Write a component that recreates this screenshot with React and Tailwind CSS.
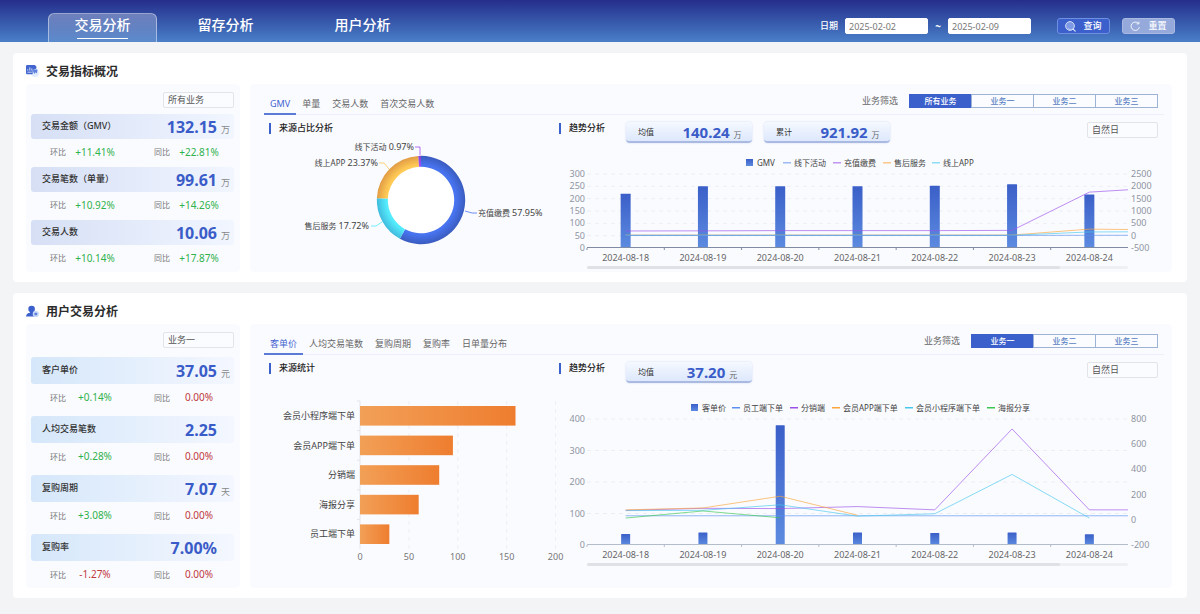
import { useState } from 'react';
import { ChevronDown } from 'lucide-react';
import clsx from 'clsx';

const NAV = ['交易分析', '留存分析', '用户分析'];

const OVERVIEW_STATS = [
  { label: '交易金额（GMV）', value: '132.15', unit: '万', mom: '+11.41%', yoy: '+22.81%' },
  { label: '交易笔数（单量）', value: '99.61', unit: '万', mom: '+10.92%', yoy: '+14.26%' },
  { label: '交易人数', value: '10.06', unit: '万', mom: '+10.14%', yoy: '+17.87%' },
];

const USER_STATS = [
  { label: '客户单价', value: '37.05', unit: '元', mom: '+0.14%', yoy: '0.00%' },
  { label: '人均交易笔数', value: '2.25', unit: '', mom: '+0.28%', yoy: '0.00%' },
  { label: '复购周期', value: '7.07', unit: '天', mom: '+3.08%', yoy: '0.00%' },
  { label: '复购率', value: '7.00%', unit: '', mom: '-1.27%', yoy: '0.00%' },
];

const DATES = [
  '2024-08-18',
  '2024-08-19',
  '2024-08-20',
  '2024-08-21',
  '2024-08-22',
  '2024-08-23',
  '2024-08-24',
];

// the eighth value of a line is where it leaves the zoomed window
const GMV_TREND = {
  id: 'gmv',
  height: 129,
  top: 31,
  bottom: 105,
  legendY: 20,
  legendOpacity: 0.6,
  axisColor: '#7f8ca3',
  left: [0, 50, 100, 150, 200, 250, 300],
  right: [-500, 0, 500, 1000, 1500, 2000, 2500],
  barWidth: 10,
  bars: [220, 250, 250, 250, 252, 258, 217],
  legend: [
    { name: 'GMV', x: 187 },
    { name: '线下活动', x: 224, color: '#5b8ff0' },
    { name: '充值缴费', x: 274, color: '#9b51e8' },
    { name: '售后服务', x: 324, color: '#fba63c' },
    { name: '线上APP', x: 373, color: '#46c8ee' },
  ],
  lines: [
    { color: '#9b51e8', values: [190, 195, 205, 205, 205, 215, 1765, 1860] },
    { color: '#fba63c', values: [25, 25, 25, 25, 25, 25, 265, 250] },
    { color: '#46c8ee', values: [15, 15, 15, 15, 15, 15, 150, 155] },
    { color: '#5b8ff0', values: [10, 10, 10, 10, 10, 10, 15, 15] },
  ],
};

const PRICE_TREND = {
  id: 'price',
  height: 205,
  top: 36,
  bottom: 162,
  legendY: 25,
  legendOpacity: 1,
  axisColor: '#b3bccb',
  left: [0, 100, 200, 300, 400],
  right: [-200, 0, 200, 400, 600, 800],
  barWidth: 9,
  bars: [35, 40, 380, 40, 38, 40, 34],
  legend: [
    { name: '客单价', x: 132 },
    { name: '员工端下单', x: 173, color: '#5b8ff0' },
    { name: '分销端', x: 231, color: '#9b51e8' },
    { name: '会员APP端下单', x: 273, color: '#fba63c' },
    { name: '会员小程序端下单', x: 346, color: '#46c8ee' },
    { name: '海报分享', x: 428, color: '#3cc850' },
  ],
  lines: [
    { color: '#5b8ff0', values: [32, 32, 32, 32, 32, 32, 32, 32] },
    { color: '#9b51e8', values: [75, 91, 89, 105, 79, 721, 79, 79] },
    { color: '#46c8ee', values: [73, 75, 119, 29, 48, 360, 14] },
    { color: '#fba63c', values: [79, 94, 187, 36] },
    { color: '#3cc850', values: [14, 70, 16] },
  ],
};

const SHARES = [
  {
    name: '充值缴费',
    pct: 57.95,
    inner: '#4874f0',
    outer: '#3a5bbd',
    leader: '201,77 208,79 213,79',
    x: 214,
    y: 79,
    anchor: 'start',
  },
  {
    name: '售后服务',
    pct: 17.72,
    inner: '#54ebfc',
    outer: '#3fb9dc',
    leader: '118,88 112,92 107,92',
    x: 105,
    y: 92,
    anchor: 'end',
  },
  {
    name: '线上APP',
    pct: 23.37,
    inner: '#ffca55',
    outer: '#e09a44',
    leader: '125,35 120,29 115,29',
    x: 114,
    y: 29,
    anchor: 'end',
  },
  {
    name: '线下活动',
    pct: 0.97,
    inner: '#a04df5',
    outer: '#8440d0',
    leader: '156,21 156,13 151,13',
    x: 150,
    y: 13,
    anchor: 'end',
  },
];

const SOURCES = [
  { name: '会员小程序端下单', value: 159 },
  { name: '会员APP端下单', value: 95 },
  { name: '分销端', value: 81 },
  { name: '海报分享', value: 60 },
  { name: '员工端下单', value: 30 },
];

function SelectBox({ label, options }) {
  return (
    <div className="relative h-4 w-[71px] shrink-0">
      <select
        aria-label={label}
        className="block h-full w-full appearance-none rounded-xs border border-[#e2e4ea] bg-[#fbfcff] pl-1 text-[9px] leading-[14px] text-[#555]"
      >
        {options.map((o) => (
          <option key={o}>{o}</option>
        ))}
      </select>
      <ChevronDown className="pointer-events-none absolute top-1 right-1.5 h-2 w-2 text-white" />
    </div>
  );
}

function Delta({ label, value }) {
  return (
    <div className="flex items-center gap-[9px]">
      <span className="text-[8px] text-[#777]">{label}</span>
      <span
        className={clsx(
          'w-10 text-center text-[10px]',
          value.startsWith('+') ? 'text-[#2fb24c]' : 'text-[#c0393f]'
        )}
      >
        {value}
      </span>
    </div>
  );
}

function Stat({ stat, roomy }) {
  return (
    <div>
      <div
        className={clsx(
          'flex items-center justify-between rounded-[3px] bg-linear-to-r pr-1 pl-[11px]',
          roomy ? 'h-[27px] from-[#d5e7fa] to-[#f4f7ff]' : 'h-[25px] from-[#d6dff5] to-[#f1f6ff]'
        )}
      >
        <span className="pb-0.5 text-[9px] font-medium text-[#333]">{stat.label}</span>
        <span className="flex items-baseline gap-1">
          <span className="text-[16px] leading-5 font-bold text-[#3a5cc8]">{stat.value}</span>
          <span className="w-[9px] text-[9px] text-[#888]">{stat.unit}</span>
        </span>
      </div>
      <div
        className={clsx(
          'flex items-center justify-between pr-[15px] pl-[19px]',
          roomy ? 'h-[27px]' : 'h-[26px]'
        )}
      >
        <Delta label="环比" value={stat.mom} />
        <Delta label="同比" value={stat.yoy} />
      </div>
    </div>
  );
}

function StatPanel({ stats, options, roomy }) {
  return (
    <div className="w-[214px] shrink-0 rounded-[4px] bg-[#fafbff] pt-2 pr-[6px] pl-[5px]">
      <div className={clsx('flex justify-end', roomy ? 'mb-[9px]' : 'mb-[6px]')}>
        <SelectBox label="业务" options={options} />
      </div>
      <div className={clsx('flex flex-col', roomy ? 'gap-[5px]' : 'gap-0.5')}>
        {stats.map((s) => (
          <Stat key={s.label} stat={s} roomy={roomy} />
        ))}
      </div>
    </div>
  );
}

function TabBar({ tabs, filters }) {
  const [tab, setTab] = useState(tabs[0]);
  const [filter, setFilter] = useState(filters[0]);
  return (
    <div className="flex h-[31px] items-end justify-between border-b border-[#edf0fa]">
      <div className="-mb-px flex">
        {tabs.map((t) => (
          <button
            key={t}
            onClick={() => setTab(t)}
            className={clsx(
              'h-5 border-b-2 px-1.5 text-[9px]',
              t === tab ? 'border-[#5c7bd6] text-[#3f62cf]' : 'border-transparent text-[#666]'
            )}
          >
            {t}
          </button>
        ))}
      </div>
      <div className="mr-[6px] flex items-center gap-3 pb-[6px]">
        <span className="text-[9px] leading-[14px] text-[#666]">业务筛选</span>
        <div className="flex">
          {filters.map((f) => (
            <button
              key={f}
              onClick={() => setFilter(f)}
              className={clsx(
                '-ml-px h-[14px] w-[63px] border text-[8px] leading-3 font-medium',
                f === filter
                  ? 'border-[#3b5fcb] bg-[#3b5fcb] text-white'
                  : 'border-[#9db3d6] bg-[#fbfcff] text-[#5b82c4]'
              )}
            >
              {f}
            </button>
          ))}
        </div>
      </div>
    </div>
  );
}

function SubTitle({ children }) {
  return (
    <h3 className="flex h-3 items-center gap-2 text-[9px] font-medium text-[#222]">
      <span className="h-[11px] w-[2px] bg-[#3b5fcb]" />
      {children}
    </h3>
  );
}

function Badge({ label, value, unit }) {
  return (
    <div className="flex h-[21px] w-[126px] items-center rounded-[4px] border-b-2 border-[#a9b9e2] bg-linear-to-b from-[#f5f9ff] to-[#dde8fc] shadow-[0_0_2px_#c6d2ee]">
      <span className="w-[46px] pl-3 text-[8px] text-[#333]">{label}</span>
      <span className="flex flex-1 items-baseline justify-center gap-1">
        <span className="text-[15px] leading-[18px] font-bold text-[#3a5cc8]">{value}</span>
        <span className="text-[8px] text-[#666]">{unit}</span>
      </span>
    </div>
  );
}

function Donut() {
  const cx = 157;
  const cy = 66;
  const point = (share, r) => {
    const a = (share / 100) * Math.PI * 2;
    return `${cx + r * Math.sin(a)} ${cy - r * Math.cos(a)}`;
  };
  let start = 0;
  return (
    <svg viewBox="0 0 295 138" className="block w-full">
      <defs>
        {SHARES.map((s, i) => (
          <radialGradient
            key={s.name}
            id={`share-${i}`}
            gradientUnits="userSpaceOnUse"
            cx={cx}
            cy={cy}
            r="44.5"
          >
            <stop offset="0.78" stopColor={s.inner} />
            <stop offset="1" stopColor={s.outer} />
          </radialGradient>
        ))}
      </defs>
      <circle cx={cx} cy={cy} r="34" fill="#fff" />
      {SHARES.map((s, i) => {
        const from = start;
        const to = start + s.pct;
        start = to;
        const large = s.pct > 50 ? 1 : 0;
        return (
          <g key={s.name}>
            <path
              d={`M${point(from, 44.2)} A44.2 44.2 0 ${large} 1 ${point(to, 44.2)} L${point(to, 33.2)} A33.2 33.2 0 ${large} 0 ${point(from, 33.2)} Z`}
              fill={`url(#share-${i})`}
            />
            <polyline points={s.leader} fill="none" stroke={s.inner} strokeOpacity="0.8" />
            <text x={s.x} y={s.y + 3} textAnchor={s.anchor} fontSize="8" fill="#444">
              {s.name} <tspan fontSize="9">{s.pct}%</tspan>
            </text>
          </g>
        );
      })}
    </svg>
  );
}

function SourceBars() {
  const x0 = 96;
  const top = 27;
  const band = 29.6;
  const scale = 0.978;
  return (
    <svg viewBox="0 0 295 214" className="block w-full overflow-visible">
      <defs>
        <linearGradient id="source-bar">
          <stop offset="0" stopColor="#f2a057" />
          <stop offset="1" stopColor="#ee7d2f" />
        </linearGradient>
      </defs>
      {[0, 50, 100, 150, 200].map((v) => (
        <g key={v}>
          <line
            x1={x0 + v * scale}
            x2={x0 + v * scale}
            y1={top}
            y2={top + band * 5}
            stroke={v ? '#eceef3' : '#e2e5ec'}
            strokeDasharray={v ? '4 4' : undefined}
          />
          <text x={x0 + v * scale} y="186" textAnchor="middle" fontSize="9" fill="#777">
            {v}
          </text>
        </g>
      ))}
      {SOURCES.map((s, i) => (
        <g key={s.name}>
          <line x1={x0 - 3} x2={x0} y1={top + i * band} y2={top + i * band} stroke="#e2e5ec" />
          <rect
            x={x0}
            y={top + i * band + 5}
            width={s.value * scale}
            height="19.6"
            fill="url(#source-bar)"
          />
          <text x={x0 - 5} y={top + i * band + 18} textAnchor="end" fontSize="9" fill="#444">
            {s.name}
          </text>
        </g>
      ))}
    </svg>
  );
}

function TrendChart({ chart }) {
  const { id, top, bottom, left, right, bars, barWidth, lines, legend, legendY } = chart;
  const x0 = 28;
  const x1 = 569;
  const band = (x1 - x0) / DATES.length;
  const scaleOf = (ticks) => {
    const min = ticks[0];
    const max = ticks[ticks.length - 1];
    return (v) => bottom - ((v - min) / (max - min)) * (bottom - top);
  };
  const yLeft = scaleOf(left);
  const yRight = scaleOf(right);
  const xAt = (i) => Math.min(x0 + band * (i + 0.5), x1);

  return (
    <svg viewBox={`0 0 605 ${chart.height}`} className="block w-full">
      <defs>
        <linearGradient id={`bar-${id}`} x2="0" y2="1">
          <stop offset="0" stopColor="#3b5fc8" />
          <stop offset="1" stopColor="#5c8be0" />
        </linearGradient>
      </defs>

      {legend.map((l) => (
        <g key={l.name}>
          {l.color ? (
            <rect
              x={l.x}
              y={legendY - 1}
              width="8"
              height="1.5"
              fill={l.color}
              opacity={chart.legendOpacity}
            />
          ) : (
            <rect x={l.x} y={legendY - 4} width="7" height="7" fill={`url(#bar-${id})`} />
          )}
          <text x={l.x + 11} y={legendY + 3} fontSize="8" fill="#444">
            {l.name}
          </text>
        </g>
      ))}

      {left.map((v) => (
        <g key={v}>
          {v > 0 && (
            <line x1={x0} x2={x1} y1={yLeft(v)} y2={yLeft(v)} stroke="#eceef4" strokeDasharray="4 4" />
          )}
          <text x={x0 - 2} y={yLeft(v) + 3} textAnchor="end" fontSize="9" fill="#8f959f">
            {v}
          </text>
        </g>
      ))}
      {right.map((v) => (
        <text key={v} x={x1 + 3} y={yRight(v) + 3} fontSize="9" fill="#8f959f">
          {v}
        </text>
      ))}

      {bars.map((v, i) => (
        <rect
          key={DATES[i]}
          x={xAt(i) - barWidth / 2}
          y={yLeft(v)}
          width={barWidth}
          height={bottom - yLeft(v)}
          rx="0.5"
          fill={`url(#bar-${id})`}
        />
      ))}
      <path
        d={`M${x0} ${bottom - 0.5}H${x1}` + DATES.map((_, i) => `M${x0 + i * band} ${bottom}v2`).join('')}
        stroke={chart.axisColor}
        fill="none"
      />
      {lines.map((l) => (
        <polyline
          key={l.color}
          points={l.values.map((v, i) => `${xAt(i)},${yRight(v)}`).join(' ')}
          fill="none"
          stroke={l.color}
          strokeOpacity="0.65"
        />
      ))}
      {DATES.map((d, i) => (
        <text key={d} x={xAt(i)} y={bottom + 13} textAnchor="middle" fontSize="9" fill="#666">
          {d}
        </text>
      ))}

      <rect x={x0} y={bottom + 18} width={x1 - x0} height="3" rx="1.5" fill="#eef0f3" />
      <rect x={x0} y={bottom + 18} width="473" height="3" rx="1.5" fill="#dfe1e6" />
    </svg>
  );
}

function AnalysisPanel({ tabs, filters, sourceTitle, source, badges, trend }) {
  return (
    <div className="min-w-0 flex-1 rounded-[4px] bg-[#fafbff] pr-2 pl-[14px]">
      <TabBar tabs={tabs} filters={filters} />
      <div className="grid grid-cols-[295fr_605fr]">
        <div className="pt-[7px]">
          <div className="pl-[5px]">
            <SubTitle>{sourceTitle}</SubTitle>
          </div>
          {source}
        </div>
        <div className="pt-[7px]">
          <div className="flex items-start">
            <SubTitle>趋势分析</SubTitle>
            <div className="ml-[21px] flex gap-3">
              {badges.map((b) => (
                <Badge key={b.label} {...b} />
              ))}
            </div>
            <div className="mr-[6px] ml-auto">
              <SelectBox label="统计周期" options={['自然日', '自然周', '自然月']} />
            </div>
          </div>
          <TrendChart chart={trend} />
        </div>
      </div>
    </div>
  );
}

function Section({ icon, title, children }) {
  return (
    <section className="rounded-[4px] bg-white pr-[15px] pb-[10px] pl-[13px]">
      <div className="flex h-[31px] items-center gap-[7px] pt-1.5">
        {icon}
        <h2 className="text-[12px] leading-4 font-bold text-[#2b2b2b]">{title}</h2>
      </div>
      <div className="flex gap-[10px]">{children}</div>
    </section>
  );
}

function OverviewIcon() {
  return (
    <svg width="13" height="14" viewBox="0 0 13 14" aria-hidden="true">
      <circle cx="9" cy="8" r="4" fill="#e3ecfd" />
      <path d="M1.2 0h7.6L10.4 1.4V3.6L6.6 5v4.2H1.2A1.2 1.2 0 0 1 0 8V1.2A1.2 1.2 0 0 1 1.2 0z" fill="#4265cf" />
      <path d="M1.8 5.6V4.2M3.8 5.6V2.4M5.8 5.6V3.4M1.4 7.2h4.4" stroke="#dbe5fb" strokeWidth="0.9" />
      <path d="M6.4 4.4h5.2L10.8 8.6 9.6 7.2 8.2 9z" fill="#5c80dc" />
    </svg>
  );
}

function UserIcon() {
  return (
    <svg width="13" height="14" viewBox="0 0 13 14" aria-hidden="true">
      <circle cx="5.6" cy="4" r="3.3" fill="#3b5fcb" />
      <path d="M0 11.6C0 8.9 2.2 8 4 7.7V6h3.2v1.7C9.4 8 11.2 9 11.2 11.6z" fill="#3b5fcb" />
      <circle cx="9.8" cy="9" r="3.1" fill="#c9d8f8" />
      <rect x="8.5" y="7.7" width="2.6" height="2.6" rx="0.6" fill="#5c80dc" />
    </svg>
  );
}

function Header() {
  const [active, setActive] = useState(NAV[0]);
  const dateClass =
    'h-4 w-[83px] rounded-xs border border-white bg-white pl-[3px] text-[9px] leading-[14px] text-[#777]';
  return (
    <header className="flex h-[42px] items-end justify-between bg-linear-to-b from-[#262d8c] to-[#4a7fc8] pr-[25px] pl-12">
      <nav className="flex">
        {NAV.map((n) => (
          <button
            key={n}
            onClick={() => setActive(n)}
            className={clsx(
              'flex h-[29px] flex-col items-center text-[14px] leading-[22px] font-medium text-white',
              n === active
                ? 'w-[109px] rounded-t-[6px] border border-b-0 border-white/45 bg-linear-to-b from-white/30 to-white/10'
                : 'w-[137px] border border-b-0 border-transparent'
            )}
          >
            {n}
            {n === active && <span className="mt-0.5 h-px w-[51px] bg-white" />}
          </button>
        ))}
      </nav>
      <div className="flex items-center pb-2 text-[9px] text-white">
        <label htmlFor="from" className="mr-[7px] font-medium">
          日期
        </label>
        <input id="from" defaultValue="2025-02-02" className={dateClass} />
        <span className="w-5 text-center text-[10px] leading-4 font-bold">~</span>
        <input aria-label="结束日期" defaultValue="2025-02-09" className={dateClass} />
        <button className="ml-[26px] flex h-4 w-[53px] items-center justify-center gap-[7px] rounded-[3px] border border-[#6f8fe0] bg-[#3b5fcb] font-medium">
          <svg width="11" height="11" viewBox="0 0 11 11" fill="none" aria-hidden="true">
            <circle cx="5" cy="5" r="4.4" fill="#7e9ae4" stroke="#dce5fb" strokeWidth="0.9" />
            <path d="M2 6.5A4 4 0 0 0 8 7.5 5 5 0 0 1 2 6.5z" fill="#fff" />
            <path d="M8.2 8.2l2 2" stroke="#dce5fb" strokeWidth="1.2" strokeLinecap="round" />
          </svg>
          查询
        </button>
        <button className="ml-3 flex h-4 w-[53px] items-center justify-center gap-[7px] rounded-[3px] border border-[#a9b9e2] bg-[#95a9db] font-medium">
          <svg width="11" height="11" viewBox="0 0 11 11" fill="none" aria-hidden="true">
            <path
              d="M9.4 6.2A4.2 4.2 0 1 1 8.4 2.4M8.9 0.6v2.3H6.6"
              stroke="#fff"
              strokeOpacity="0.85"
              strokeWidth="1"
            />
          </svg>
          重置
        </button>
      </div>
    </header>
  );
}

export default function App() {
  return (
    <div className="min-h-screen bg-[#f3f4f6] font-['Noto_Sans','Noto_Sans_CJK_SC',sans-serif]">
      <Header />
      <main className="flex flex-col gap-[11px] px-[13px] pt-[11px] pb-4">
        <Section icon={<OverviewIcon />} title="交易指标概况">
          <StatPanel stats={OVERVIEW_STATS} options={['所有业务', '业务一', '业务二', '业务三']} />
          <AnalysisPanel
            tabs={['GMV', '单量', '交易人数', '首次交易人数']}
            filters={['所有业务', '业务一', '业务二', '业务三']}
            sourceTitle="来源占比分析"
            source={<Donut />}
            badges={[
              { label: '均值', value: '140.24', unit: '万' },
              { label: '累计', value: '921.92', unit: '万' },
            ]}
            trend={GMV_TREND}
          />
        </Section>
        <Section icon={<UserIcon />} title="用户交易分析">
          <StatPanel stats={USER_STATS} options={['业务一', '业务二', '业务三']} roomy />
          <AnalysisPanel
            tabs={['客单价', '人均交易笔数', '复购周期', '复购率', '日单量分布']}
            filters={['业务一', '业务二', '业务三']}
            sourceTitle="来源统计"
            source={<SourceBars />}
            badges={[{ label: '均值', value: '37.20', unit: '元' }]}
            trend={PRICE_TREND}
          />
        </Section>
      </main>
    </div>
  );
}
